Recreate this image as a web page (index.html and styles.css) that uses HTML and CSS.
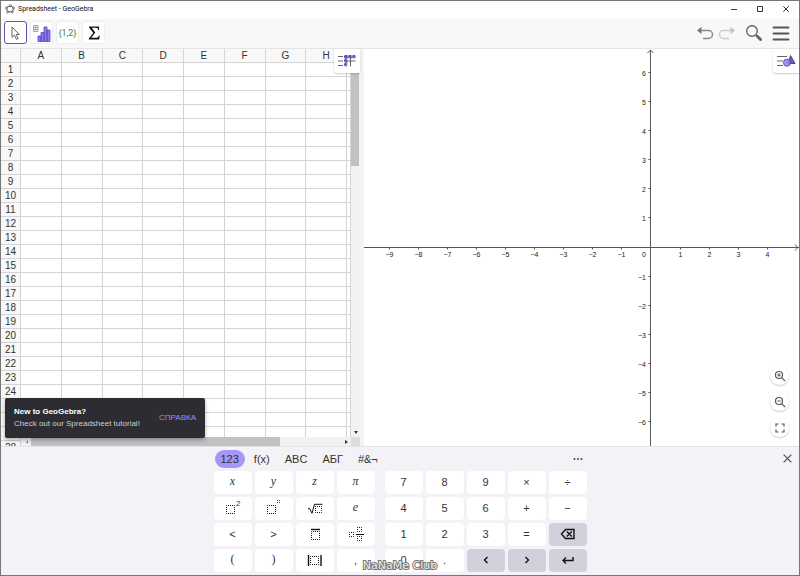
FILE: index.html
```html
<!DOCTYPE html>
<html lang="en">
<head>
  <meta charset="UTF-8" />
  <meta name="viewport" content="width=device-width, initial-scale=1.0" />
  <title>Spreadsheet - GeoGebra</title>
  <link rel="stylesheet" href="styles.css">
</head>
<body>
  <div class="app">
    <!-- Title bar -->
    <header class="titlebar">
      <svg class="logo" viewBox="0 0 10 10">
        <ellipse cx="5" cy="5" rx="3.4" ry="2.9" fill="none" stroke="#555" stroke-width="1" />
        <g fill="#fff" stroke="#444" stroke-width=".7">
          <circle cx="5.4" cy="1.6" r="1" /><circle cx="8.6" cy="4" r="1" /><circle cx="7.3" cy="8" r="1" /><circle cx="2.6" cy="8" r="1" /><circle cx="1.5" cy="4" r="1" />
        </g>
      </svg>
      <span class="title">Spreadsheet - GeoGebra</span>
      <div class="window-buttons">
        <button aria-label="Minimize"><svg viewBox="0 0 8 8"><path d="M1 4.5h6" /></svg></button>
        <button aria-label="Maximize"><svg viewBox="0 0 8 8"><path d="M1.5 1.5h5v5h-5z" /></svg></button>
        <button aria-label="Close"><svg viewBox="0 0 8 8"><path d="M1.3 1.3l5.4 5.4M6.7 1.3l-5.4 5.4" /></svg></button>
      </div>
    </header>

    <!-- Toolbar -->
    <nav class="toolbar">
      <button class="tool selected" aria-label="Move">
        <svg viewBox="0 0 20 20"><path d="M6 4v10.3l2.5-2.2 2 4.3 1.7-.8-2-4.1h3.1z" fill="#fff" stroke="#555" stroke-width=".9" /></svg>
      </button>
      <button class="tool" aria-label="One variable analysis">
        <svg viewBox="0 0 20 20">
          <path d="M1.5 2.5h4.5v6h-4.5zM1.5 4.5h4.5M1.5 6.5h4.5M3.7 2.5v6" fill="none" stroke="#888" stroke-width=".7" />
          <path d="M6 13h3v5.5h-3zM9 9.500h3v9h-3zM12 4h3v14.500h-3zM15 7h3v11.500h-3z" fill="#8a7af0" stroke="#554bb8" stroke-width=".8" />
        </svg>
      </button>
      <button class="tool list">{1,2}</button>
      <button class="tool" aria-label="Sum">
        <svg viewBox="0 0 20 20"><path d="M5 3.500h10v3.500h-.8c-.2-1.500-.8-2.200-2.200-2.200h-4.300l3.600 4.700-4 5.300h5c1.500 0 2.200-.7 2.600-2.200h.8l-.5 3.900h-10.400v-.9l4.500-5.600-4.300-5.500z" fill="#111" /></svg>
      </button>
      <div class="actions">
        <button aria-label="Undo"><svg viewBox="0 0 18 18"><path d="M3 6.500h9.500a4 4 0 0 1 0 8H7" fill="none" stroke="#8a8a8a" stroke-width="1.500" /><path d="M5.500 2.800v7.200L1 6.400z" fill="#777" /></svg></button>
        <button aria-label="Redo"><svg viewBox="0 0 18 18"><path d="M15 6.500H5.500a4 4 0 0 0 0 8H11" fill="none" stroke="#ccc" stroke-width="1.500" /><path d="M12.500 2.800v7.200L17 6.400z" fill="#c4c4c4" /></svg></button>
        <button class="search" aria-label="Search"><svg viewBox="0 0 18 18"><circle cx="7" cy="7" r="5.300" fill="none" stroke="#666" stroke-width="1.400" /><path d="M10.700 10.700l1.500 1.500" stroke="#666" stroke-width="1.500" /><path d="M12.300 12.300l3.200 3.200" stroke="#666" stroke-width="3" stroke-linecap="round" /></svg></button>
        <button class="menu" aria-label="Menu"><svg viewBox="0 0 18 18"><path d="M1.500 3.500h15M1.500 9.500h15M1.500 15.500h15" stroke="#555" stroke-width="1.800" stroke-linecap="round" /></svg></button>
      </div>
    </nav>

    <!-- Views -->
    <main class="views">
      <section class="sheet">
        <div class="cells">
          <table>
            <thead><tr id="columns"></tr></thead>
            <tbody id="rows"></tbody>
          </table>
          <div class="scroll-x">
            <span class="arrow left"></span>
            <div class="track"><div class="thumb"></div></div>
            <span class="arrow right"></span>
          </div>
        </div>
        <div class="scroll-y">
          <div class="track"><div class="thumb"></div></div>
          <span class="arrow down"></span>
          <span class="corner"></span>
        </div>
        <button class="style-button" aria-label="Spreadsheet style">
          <svg viewBox="0 0 20 16">
            <path d="M1 3.500h5M1 8h5M1 12.500h5" stroke="#666" stroke-width="1.100" />
            <path d="M7.500 2h11v3.500h-8v8h-3z" fill="#b0a6ee" />
            <path d="M9 2v11M13.500 2v11.500M8 8h10.500M7 4h11.500" stroke="#54515f" stroke-width=".9" fill="none" />
            <path d="M8 2.500v10.500M8 3h10" stroke="#5a4bc5" stroke-width="2" stroke-dasharray="2 2" />
          </svg>
        </button>
      </section>
      <div class="splitter"></div>
      <section class="graph">
        <svg class="axes" id="axes" viewBox="0 0 435 397" preserveAspectRatio="xMidYMid slice"></svg>
        <button class="style-button" aria-label="Graphics style">
          <svg viewBox="0 0 20 16">
            <path d="M1 3.500h10M1 8h6M1 12.500h6" stroke="#666" stroke-width="1.100" />
            <path d="M14.500 2.500l4.500 8h-7z" fill="#6557d2" stroke="#444" stroke-width=".9" />
            <circle cx="11" cy="9.700" r="3.600" fill="#8b7ff0" fill-opacity=".85" stroke="#5548b8" stroke-width=".8" />
          </svg>
        </button>
        <div class="zoom-buttons">
          <button aria-label="Zoom in"><svg viewBox="0 0 12 12"><circle cx="5" cy="5" r="3.500" /><path d="M7.600 7.600l3.600 3.600M3.300 5h3.400M5 3.300v3.400" /></svg></button>
          <button aria-label="Zoom out"><svg viewBox="0 0 12 12"><circle cx="5" cy="5" r="3.500" /><path d="M7.600 7.600l3.600 3.600M3.300 5h3.400" /></svg></button>
          <button aria-label="Full screen"><svg viewBox="0 0 12 12"><path d="M2 4.500v-2.500h2.500M7.500 2h2.500v2.500M10 7.500v2.500h-2.500M4.500 10h-2.500v-2.500" /></svg></button>
        </div>
      </section>

      <div class="toast">
        <div>
          <strong>New to GeoGebra?</strong>
          <p>Check out our Spreadsheet tutorial!</p>
        </div>
        <a href="#">СПРАВКА</a>
      </div>
    </main>

    <!-- Keyboard -->
    <section class="keyboard">
      <div class="tabs">
        <button class="active">123</button>
        <button>f(x)</button>
        <button>ABC</button>
        <button>АБГ</button>
        <button>#&amp;¬</button>
        <button class="more" aria-label="More"><svg viewBox="0 0 10 4"><circle cx="1.500" cy="2" r="1" /><circle cx="5" cy="2" r="1" /><circle cx="8.500" cy="2" r="1" /></svg></button>
      </div>
      <button class="close" aria-label="Close keyboard"><svg viewBox="0 0 10 10"><path d="M1.500 1.500l7 7M8.500 1.500l-7 7" stroke="#555" stroke-width="1.200" /></svg></button>
      <div class="keys">
        <div class="pad math">
          <button class="var">x</button>
          <button class="var">y</button>
          <button class="var">z</button>
          <button class="var">π</button>
          <button aria-label="Square"><svg viewBox="0 0 20 18"><rect class="slot" x="3.500" y="6.500" width="8" height="8" /><text x="13" y="7">2</text></svg></button>
          <button aria-label="Power"><svg viewBox="0 0 20 18"><rect class="slot" x="3.500" y="6.500" width="8" height="8" /><rect class="slot" x="13.500" y="1.500" width="2" height="2" /></svg></button>
          <button aria-label="Square root"><svg viewBox="0 0 20 18"><rect class="slot" x="10.500" y="7.500" width="6" height="6" /><path class="line" d="M3 10l1.500-.7 2.500 5 2.500-9h8" /></svg></button>
          <button class="var">e</button>
          <button>&lt;</button>
          <button>&gt;</button>
          <button aria-label="Recurring decimal"><svg viewBox="0 0 20 18"><rect class="slot" x="6.500" y="6.500" width="8" height="8" /><path class="bar" d="M6 4.500h9" /></svg></button>
          <button aria-label="Mixed number"><svg viewBox="0 0 20 18"><rect class="slot" x="3.500" y="7.500" width="4" height="4" /><rect class="slot" x="11.500" y="2.500" width="4" height="4" /><rect class="slot" x="11.500" y="11.500" width="4" height="4" /><path class="line" d="M10 9.500h8" /></svg></button>
          <button class="paren">(</button>
          <button class="paren">)</button>
          <button aria-label="Absolute value"><svg viewBox="0 0 20 18"><rect class="slot" x="5.500" y="5.500" width="8" height="8" /><path class="bar" d="M3.500 4v11M16 4v11" /></svg></button>
          <button>,</button>
        </div>
        <div class="pad digits">
          <button>7</button>
          <button>8</button>
          <button>9</button>
          <button>×</button>
          <button>÷</button>
          <button>4</button>
          <button>5</button>
          <button>6</button>
          <button>+</button>
          <button>−</button>
          <button>1</button>
          <button>2</button>
          <button>3</button>
          <button>=</button>
          <button class="action" aria-label="Backspace"><svg viewBox="0 0 20 18"><path d="M7.500 4.500h8.500v9h-8.500l-4-4.500zM8.800 6.500l5 5M13.800 6.500l-5 5" /></svg></button>
          <button>0</button>
          <button>.</button>
          <button class="action" aria-label="Left"><svg viewBox="0 0 20 18"><path d="M11.500 6l-3 3 3 3" /></svg></button>
          <button class="action" aria-label="Right"><svg viewBox="0 0 20 18"><path d="M8.500 6l3 3-3 3" /></svg></button>
          <button class="action" aria-label="Enter"><svg viewBox="0 0 20 18"><path d="M15 6v3.500h-10M8 6.500l-3 3 3 3" /></svg></button>
        </div>
      </div>
      <div class="watermark">NaNaMe Club</div>
    </section>
  </div>

  <script src="script.js"></script>
</body>
</html>
```
FILE: styles.css
```css
* {
  box-sizing: border-box;
}
body {
  margin: 0;
  font-family: "Liberation Sans", Arial, sans-serif;
  color: #333;
  background: #fff;
}
button {
  border: none;
  background: none;
  padding: 0;
  font-family: inherit;
  color: inherit;
  cursor: pointer;
  display: flex;
  align-items: center;
  justify-content: center;
}
svg {
  display: block;
}
.app {
  height: 100vh;
  display: flex;
  flex-direction: column;
  border: 1px solid #777;
}

/* title bar */
.titlebar {
  display: flex;
  align-items: center;
  height: 18px;
  padding: 0 9px 2px 4px;
  gap: 3px;
}
.logo {
  width: 10px;
  height: 10px;
}
.title {
  font-family: Roboto, sans-serif;
  font-size: 7px;
  line-height: 10px;
  color: #111;
}
.window-buttons {
  margin-left: auto;
  display: flex;
  gap: 18px;
}
.window-buttons svg {
  width: 8px;
  height: 8px;
  fill: none;
  stroke: #333;
  stroke-width: 1;
}

/* toolbar */
.toolbar {
  display: flex;
  align-items: center;
  gap: 3px;
  height: 30px;
  padding: 0 9px 2px 3px;
  background: #f8f8f8;
  border-bottom: 1px solid #e4e4e4;
}
.tool {
  width: 23px;
  height: 23px;
  background: #fff;
  border: 1px solid #eee;
  border-radius: 3px;
}
.tool svg {
  width: 20px;
  height: 20px;
}
.tool.selected {
  border-color: #6557a8;
}
.tool.list {
  font-family: Roboto, sans-serif;
  font-size: 9px;
  color: #3f8a48;
}
.actions {
  margin-left: auto;
  display: flex;
  gap: 4px;
}
.actions svg {
  width: 18px;
  height: 18px;
}
.search {
  margin-left: 5px;
}
.menu {
  margin-left: 5px;
}

/* views */
.views {
  flex: 1;
  min-height: 0;
  display: flex;
  position: relative;
}
.sheet {
  width: 45%;
  display: flex;
  position: relative;
}
.cells {
  flex: 1;
  min-width: 0;
  overflow: hidden;
  position: relative;
}
table {
  width: 100%;
  table-layout: fixed;
  border-collapse: separate;
  border-spacing: 0;
}
th,
td {
  height: 14px;
  padding: 0;
  border-right: 1px solid #d4d4d4;
  border-bottom: 1px solid #d4d4d4;
  font-size: 10px;
  line-height: 13px;
  font-weight: 400;
  text-align: center;
}
th {
  background: #f8f8f8;
}
.edge {
  width: 20px;
}
.rest {
  width: 4px;
}
.scroll-x {
  position: absolute;
  left: 20px;
  right: 0;
  bottom: 0;
  height: 9px;
  display: flex;
  align-items: center;
  background: #f1f1f1;
}
.track {
  flex: 1;
}
.scroll-x .track,
.scroll-x .thumb {
  height: 100%;
}
.scroll-x .thumb {
  width: 80%;
  background: #c1c1c1;
}
.arrow {
  border: 2px solid transparent;
  margin: 0 3px;
}
.arrow.left {
  border-right-color: #888;
}
.arrow.right {
  border-left: 3px solid #333;
  border-right: none;
}
.arrow.down {
  border-top: 3px solid #333;
  border-bottom: none;
  margin: 3px auto;
}
.scroll-y {
  width: 9px;
  display: flex;
  flex-direction: column;
  background: #f1f1f1;
}
.scroll-y .thumb {
  width: 8px;
  height: 31%;
  background: #c1c1c1;
}
.corner {
  height: 9px;
  background: #dcdcdc;
}
.splitter {
  width: 4px;
  background: #f3f3f3;
}
.style-button {
  position: absolute;
  top: 0;
  right: 0;
  width: 26px;
  height: 24px;
  background: #fff;
  border-radius: 0 0 0 3px;
  box-shadow: 0 1px 2px rgba(0, 0, 0, 0.2);
}
.style-button svg {
  width: 20px;
  height: 16px;
}
.graph {
  flex: 1;
  min-width: 0;
  position: relative;
  overflow: hidden;
}
.axes {
  width: 100%;
  height: 100%;
}
.axes text {
  font-size: 7px;
  fill: #222;
}
.axes path {
  fill: none;
  stroke: #555;
}
.zoom-buttons {
  position: absolute;
  right: 10px;
  bottom: 9px;
  display: flex;
  flex-direction: column;
  gap: 7px;
}
.zoom-buttons button {
  width: 19px;
  height: 19px;
  border-radius: 50%;
  background: #fff;
  box-shadow: 0 1px 2px rgba(0, 0, 0, 0.2);
}
.zoom-buttons svg {
  width: 12px;
  height: 12px;
  fill: none;
  stroke: #555;
  stroke-width: 1.2;
}

/* tutorial message */
.toast {
  position: absolute;
  left: 4px;
  bottom: 8px;
  width: 200px;
  height: 40px;
  padding: 0 9px;
  display: flex;
  align-items: center;
  justify-content: space-between;
  background: #2d2c32;
  border-radius: 2px;
  box-shadow: 0 2px 4px rgba(0, 0, 0, 0.3);
  font-size: 8px;
  line-height: 12px;
  color: #ccc;
}
.toast strong {
  color: #fff;
}
.toast p {
  margin: 0;
}
.toast a {
  color: #9f8ff0;
  text-decoration: none;
}

/* keyboard */
.keyboard {
  height: 129px;
  position: relative;
  display: flex;
  flex-direction: column;
  align-items: center;
  background: #f3f2f7;
  border-top: 1px solid #e4e4e8;
}
.tabs {
  width: 373px;
  height: 24px;
  padding: 0 2px 0 1px;
  display: flex;
  align-items: center;
  gap: 3px;
}
.tabs button {
  height: 18px;
  padding: 0 6px;
  border-radius: 9px;
  font-size: 11px;
}
.tabs .active {
  background: #a796f5;
}
.tabs .more {
  margin-left: auto;
  padding: 0 2px;
}
.more svg {
  width: 10px;
  height: 4px;
  fill: #444;
}
.close {
  position: absolute;
  top: 6px;
  right: 6px;
}
.close svg {
  width: 11px;
  height: 11px;
}
.keys {
  display: flex;
  gap: 10px;
}
.pad {
  display: grid;
  grid-auto-rows: 23px;
  gap: 3px;
}
.math {
  grid-template-columns: repeat(4, 38px);
}
.digits {
  grid-template-columns: repeat(5, 38px);
}
.pad button {
  background: #fff;
  border-radius: 4px;
  font-size: 11px;
  padding-bottom: 2px;
}
.pad .var {
  font-family: "Liberation Serif", serif;
  font-style: italic;
  font-size: 12px;
}
.pad .paren {
  font-family: "Liberation Serif", serif;
  font-size: 12px;
}
.pad svg {
  width: 20px;
  height: 18px;
  fill: none;
  stroke: #111;
  stroke-width: 1.4;
}
.pad .slot {
  stroke-width: 1;
  stroke-dasharray: 1 1;
  stroke-dashoffset: 0.5;
}
.pad .line {
  stroke-width: 1;
}
.pad text {
  font-size: 8px;
  fill: #333;
  stroke: none;
}
.pad button:has(svg) {
  padding-bottom: 1px;
}
.pad .action {
  background: #d2d0da;
}
.watermark {
  position: absolute;
  left: 0;
  right: 0;
  bottom: 1px;
  text-align: center;
  font-family: "DejaVu Sans", sans-serif;
  font-size: 11px;
  line-height: 16px;
  color: #eee;
  -webkit-text-stroke: 2px #777;
  paint-order: stroke fill;
  pointer-events: none;
}
```
FILE: script.js
```js
const columns = document.getElementById('columns');
const rows = document.getElementById('rows');
const letters = 'ABCDEFGH'.split('');

columns.innerHTML = '<th class="edge"></th>' + letters.map(l => `<th>${l}</th>`).join('') + '<th class="rest"></th>';

for (let i = 1; i <= 28; i++) {
  rows.innerHTML += `<tr><th>${i}</th>${'<td></td>'.repeat(letters.length + 1)}</tr>`;
}

// Coordinate axes
const axes = document.getElementById('axes');
const origin = { x: 286.5, y: 198.5 };
const unit = 29.1;
let lines = `M0 ${origin.y}H435M431 195.500l3 3-3 3M${origin.x} 397V1M283.500 4l3-3 3 3`;
let labels = `<text x="282" y="208" text-anchor="end">0</text>`;

for (let n = -9; n <= 4; n++) {
  if (n === 0) continue;
  const x = Math.round(origin.x + n * unit) + 0.5;
  lines += `M${x} ${origin.y}v2`;
  labels += `<text x="${x}" y="208" text-anchor="middle">${String(n).replace('-', '−')}</text>`;
}

for (let n = -6; n <= 6; n++) {
  if (n === 0) continue;
  const y = Math.round(origin.y - n * unit) - 0.5;
  lines += `M${origin.x} ${y}h-2`;
  labels += `<text x="282" y="${y + 3}" text-anchor="end">${String(n).replace('-', '−')}</text>`;
}

axes.innerHTML = `<path d="${lines}" />${labels}`;
```
